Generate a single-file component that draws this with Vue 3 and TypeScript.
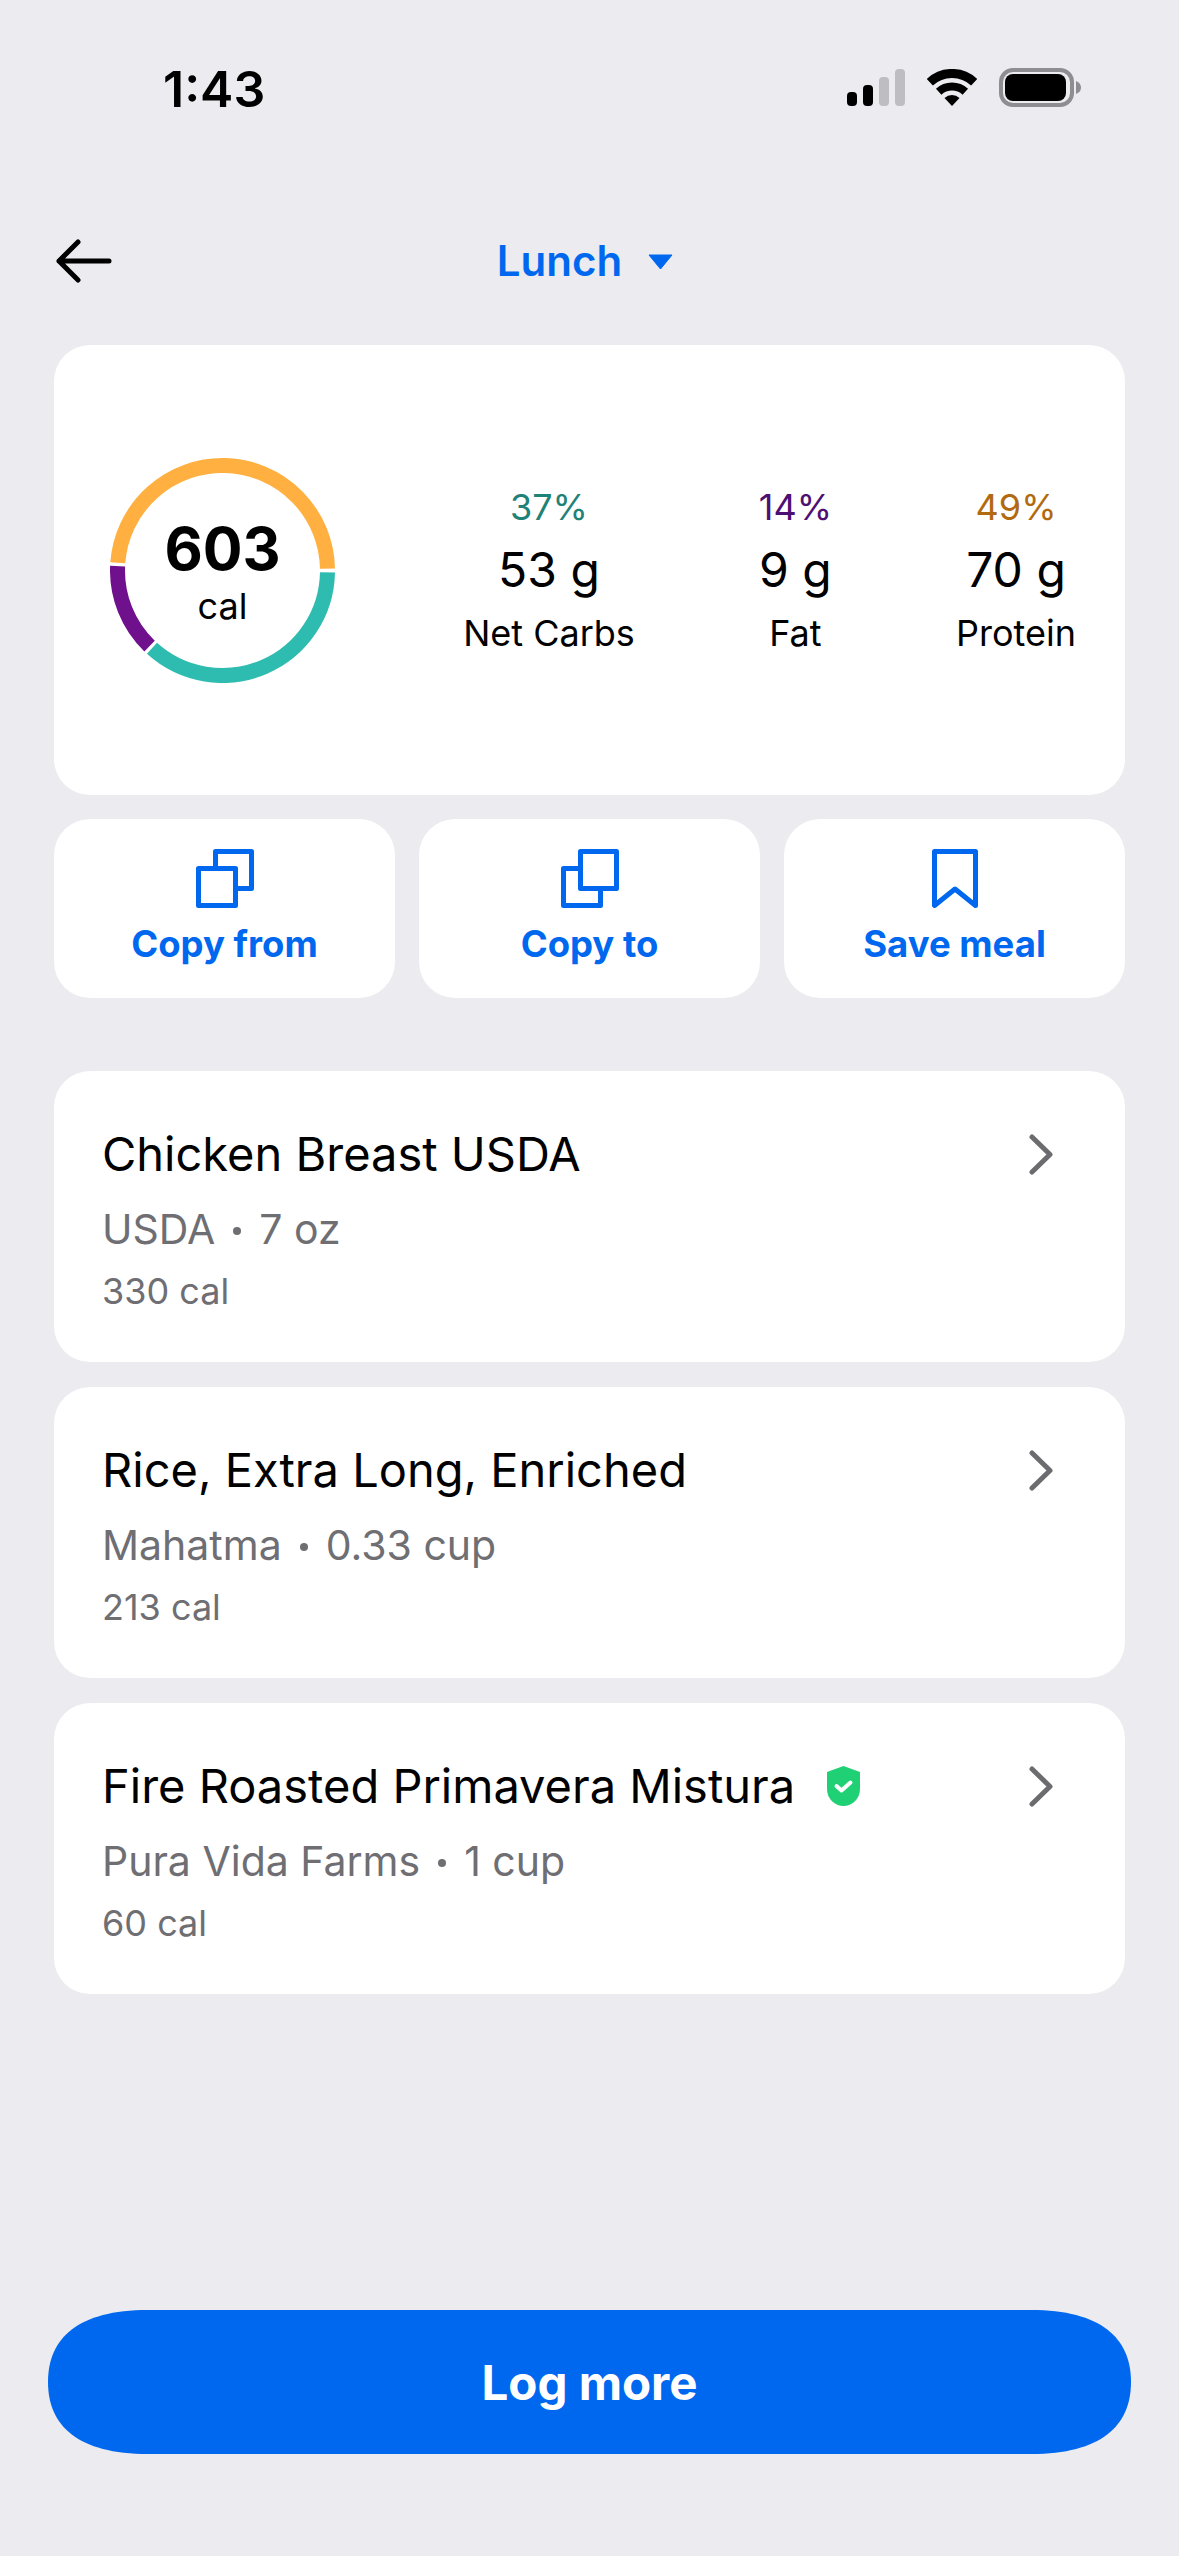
<script setup lang="ts">
type Macro = { pct: number; grams: string; label: string; color: string }
type Food = { name: string; brand: string; amount: string; cal: string; verified?: boolean }

const macros: Macro[] = [
  { pct: 37, grams: '53 g', label: 'Net Carbs', color: '#1f8277' },
  { pct: 14, grams: '9 g', label: 'Fat', color: '#4e0f73' },
  { pct: 49, grams: '70 g', label: 'Protein', color: '#b26a10' },
]

const foods: Food[] = [
  { name: 'Chicken Breast USDA', brand: 'USDA', amount: '7 oz', cal: '330 cal' },
  { name: 'Rice, Extra Long, Enriched', brand: 'Mahatma', amount: '0.33 cup', cal: '213 cal' },
  { name: 'Fire Roasted Primavera Mistura', brand: 'Pura Vida Farms', amount: '1 cup', cal: '60 cal', verified: true },
]

const R = 105

function arc(from: number, to: number) {
  const p = (deg: number) => {
    const a = (deg * Math.PI) / 180
    return `${(112.5 + R * Math.cos(a)).toFixed(2)} ${(112.5 + R * Math.sin(a)).toFixed(2)}`
  }
  return `M${p(from)} A${R} ${R} 0 0 1 ${p(to)}`
}

// goes clockwise from 3 o'clock: net carbs, fat, protein
const rings = [
  { d: arc(1, 132.2), color: '#2fbcb0' },
  { d: arc(134, 182.4), color: '#6f108c' },
  { d: arc(184.2, 359), color: '#ffb040' },
]
</script>

<template>
  <div class="screen">
    <div class="status">
      <span class="time">1:43</span>
      <div class="status-icons">
        <svg width="58" height="37" viewBox="0 0 58 37">
          <rect x="0" y="23" width="10" height="14" rx="4" fill="#000" />
          <rect x="16" y="16" width="10" height="21" rx="4" fill="#000" />
          <rect x="32" y="8" width="10" height="29" rx="4" fill="#bdbdc2" />
          <rect x="48" y="0" width="10" height="37" rx="4" fill="#bdbdc2" />
        </svg>
        <svg width="50" height="37" viewBox="0 0 50 37">
          <path d="M2.8 13.2A32.5 32.5 0 0 1 47.2 13.2" fill="none" stroke="#000" stroke-width="9" />
          <path d="M11.7 22.7A19.5 19.5 0 0 1 38.3 22.7" fill="none" stroke="#000" stroke-width="8" />
          <path d="M25 37 17.5 29A11 11 0 0 1 32.5 29Z" fill="#000" />
        </svg>
        <svg width="82" height="39" viewBox="0 0 82 39">
          <rect x="2" y="2" width="71" height="35" rx="12" fill="none" stroke="#8d8d92" stroke-width="4" />
          <rect x="6" y="6" width="61" height="27" rx="8" fill="#000" />
          <path d="M77 13 Q82 15 82 19.5 Q82 24 77 26 Z" fill="#8d8d92" />
        </svg>
      </div>
    </div>

    <header class="nav">
      <svg class="back" width="58" height="44" viewBox="0 0 58 44">
        <path d="M55 22H5M24 3 5 22l19 19" fill="none" stroke="#000" stroke-width="5" stroke-linecap="round" stroke-linejoin="round" />
      </svg>
      <div class="meal">
        <span>Lunch</span>
        <svg width="25" height="15" viewBox="0 0 25 15"><path d="M1 1h23L12.5 15Z" fill="#0068ef" stroke="#0068ef" stroke-linejoin="round" /></svg>
      </div>
    </header>

    <section class="card summary">
      <div class="ring">
        <svg width="225" height="225" viewBox="0 0 225 225">
          <path v-for="r in rings" :key="r.color" :d="r.d" fill="none" :stroke="r.color" stroke-width="15" />
        </svg>
        <div class="ring-text">
          <strong>603</strong>
          <span>cal</span>
        </div>
      </div>
      <div class="macros">
        <div v-for="m in macros" :key="m.label" class="macro">
          <span class="pct" :style="{ color: m.color }">{{ m.pct }}%</span>
          <span class="grams">{{ m.grams }}</span>
          <span class="label">{{ m.label }}</span>
        </div>
      </div>
    </section>

    <div class="actions">
      <button class="action">
        <svg width="58" height="59" viewBox="0 0 58 59" fill="none" stroke="#0068ef" stroke-width="5" stroke-linejoin="round">
          <rect x="2.5" y="19.5" width="37" height="37" />
          <path d="M19.5 19.5V2.5H55.5V39.5H39.5" />
        </svg>
        <span>Copy from</span>
      </button>
      <button class="action">
        <svg width="58" height="59" viewBox="0 0 58 59" fill="none" stroke="#0068ef" stroke-width="5" stroke-linejoin="round">
          <path d="M19.5 19.5H2.5V56.5H39.5V39.5" />
          <rect x="19.5" y="2.5" width="36" height="37" />
        </svg>
        <span>Copy to</span>
      </button>
      <button class="action">
        <svg width="46" height="59" viewBox="0 0 46 59" fill="none" stroke="#0068ef" stroke-width="5" stroke-linejoin="round">
          <path d="M2.5 2.5h41v54L23 40 2.5 56.5Z" />
        </svg>
        <span>Save meal</span>
      </button>
    </div>

    <ul class="foods">
      <li v-for="f in foods" :key="f.name" class="card food">
        <div class="food-main">
          <div class="food-name">
            <span>{{ f.name }}</span>
            <svg v-if="f.verified" width="33" height="40" viewBox="0 0 33 40">
              <path d="M16.5 0 33 6v17c0 10-8 17-16.5 17S0 33 0 23V6Z" fill="#1fd075" />
              <path d="M9.5 20l5 4.5 9-8" fill="none" stroke="#fff" stroke-width="4" stroke-linecap="round" stroke-linejoin="round" />
            </svg>
          </div>
          <div class="food-sub">{{ f.brand }}<i></i>{{ f.amount }}</div>
          <div class="food-cal">{{ f.cal }}</div>
        </div>
        <svg class="chev" width="24" height="41" viewBox="0 0 24 41">
          <path d="M3 3l18 17.5L3 38" fill="none" stroke="#6c6c70" stroke-width="5" stroke-linecap="round" stroke-linejoin="round" />
        </svg>
      </li>
    </ul>

    <button class="log">Log more</button>
  </div>
</template>

<style scoped>
.screen {
  width: 1179px;
  height: 2556px;
  box-sizing: border-box;
  display: flex;
  flex-direction: column;
  padding: 0 54px;
  background: #ebebf0;
  font-family: Inter, "Liberation Sans", sans-serif;
  color: #000;
  overflow: hidden;
}

.status {
  height: 148px;
  flex: none;
  display: flex;
  justify-content: space-between;
  align-items: flex-start;
  padding: 66px 44px 0 109px;
  box-sizing: border-box;
}

.time {
  font-size: 50px;
  font-weight: 600;
  line-height: 46px;
}

.status-icons {
  display: flex;
  align-items: center;
  gap: 22px;
  margin-top: 2px;
}

.nav {
  height: 197px;
  flex: none;
  position: relative;
  display: flex;
  align-items: flex-start;
  justify-content: center;
}

.back {
  position: absolute;
  left: 0;
  top: 91px;
}

.meal {
  display: flex;
  align-items: center;
  gap: 26px;
  margin: 88px 9px 0 0;
  color: #0068ef;
  font-size: 42px;
  font-weight: 600;
  line-height: 50px;
}

.card {
  background: #fff;
  border-radius: 36px;
}

.summary {
  height: 450px;
  flex: none;
  box-sizing: border-box;
  display: flex;
  align-items: center;
  justify-content: space-between;
  padding: 0 49px 0 56px;
}

.ring {
  position: relative;
  width: 225px;
  height: 225px;
}

.ring svg {
  display: block;
}

.ring-text {
  position: absolute;
  inset: 0;
  display: flex;
  flex-direction: column;
  align-items: center;
  justify-content: center;
}

.ring-text strong {
  font-size: 59px;
  font-weight: 700;
  line-height: 72px;
}

.ring-text span {
  font-size: 36px;
  line-height: 42px;
}

.macros {
  display: flex;
  gap: 124px;
  margin-top: 6px;
}

.macro {
  display: flex;
  flex-direction: column;
  align-items: center;
}

.pct {
  font-size: 36px;
  line-height: 50px;
}

.grams {
  margin-top: 6px;
  font-size: 48px;
  line-height: 64px;
}

.label {
  font-size: 36px;
  line-height: 62px;
}

.actions {
  display: grid;
  grid-template-columns: repeat(3, 1fr);
  gap: 24px;
  margin-top: 24px;
  flex: none;
}

.action {
  height: 179px;
  border: 0;
  padding: 30px 0 0;
  background: #fff;
  border-radius: 36px;
  display: flex;
  flex-direction: column;
  align-items: center;
  gap: 14px;
  font-family: inherit;
  font-size: 36.5px;
  font-weight: 700;
  color: #0068ef;
}

.foods {
  list-style: none;
  margin: 73px 0 0;
  padding: 0;
  display: flex;
  flex-direction: column;
  gap: 25px;
}

.food {
  height: 291px;
  box-sizing: border-box;
  padding: 0 72px 0 48px;
  display: flex;
  justify-content: space-between;
  align-items: flex-start;
}

.food-main {
  padding-top: 55px;
}

.food-name {
  display: flex;
  align-items: center;
  gap: 32px;
  font-size: 47px;
  line-height: 56px;
}

.food-sub {
  margin-top: 20px;
  display: flex;
  align-items: center;
  font-size: 41px;
  line-height: 54px;
  color: #6e6e73;
}

.food-sub i {
  width: 8px;
  height: 8px;
  margin: 4px 18px 0;
  border-radius: 50%;
  background: #6e6e73;
}

.food-cal {
  margin-top: 12px;
  font-size: 36px;
  line-height: 46px;
  color: #6e6e73;
}

.chev {
  margin-top: 63px;
}

.log {
  flex: none;
  width: 1083px;
  height: 144px;
  margin: auto 0 102px -6px;
  border: 0;
  background: #0068ef;
  clip-path: path("M100 0H983C1053 0 1083 28 1083 72C1083 116 1053 144 983 144H100C30 144 0 116 0 72C0 28 30 0 100 0Z");
  color: #fff;
  font-family: inherit;
  font-size: 47.5px;
  font-weight: 700;
}
</style>
